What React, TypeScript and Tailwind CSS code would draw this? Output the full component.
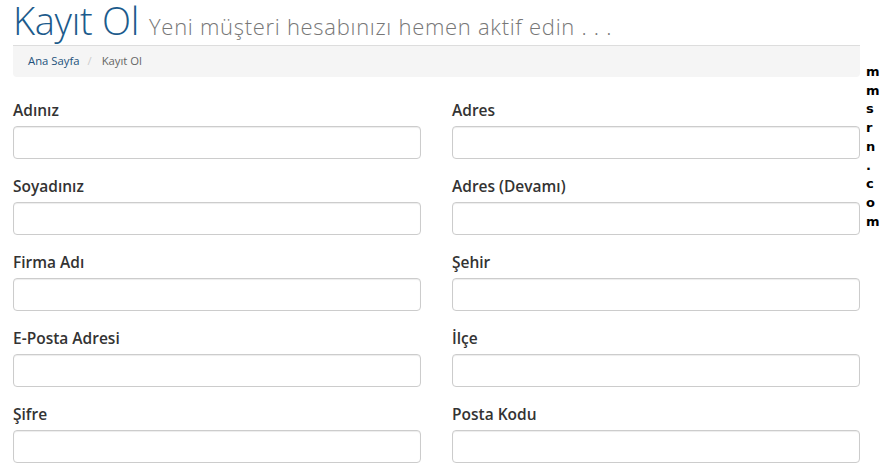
const left = ['Adınız', 'Soyadınız', 'Firma Adı', 'E-Posta Adresi', 'Şifre'];
const right = ['Adres', 'Adres (Devamı)', 'Şehir', 'İlçe', 'Posta Kodu'];

function Field({ label }: { label: string }) {
  return (
    <div className="mb-[17px]">
      <label className="block text-[15.5px] leading-[20px] font-semibold text-[#333] mb-[6px]">{label}</label>
      <input
        type="text"
        className="block w-full h-[33px] rounded-[4px] border border-[#ccc] bg-white px-3 shadow-[inset_0_1px_1px_rgba(0,0,0,0.075)] outline-none"
      />
    </div>
  );
}

export default function App() {
  return (
    <div className="flex bg-white min-h-screen pl-[13px] font-['Open_Sans',sans-serif]">
      <div className="w-[847px]">
        {/* Page title */}
        <h1 className="border-b border-[#ddd] pt-[1px] pb-[6px] text-[38px] leading-[38px] font-light text-[#1c5b8c] tracking-[-0.3px]">
          Kayıt Ol
          <span className="ml-[10px] text-[22px] leading-[20px] font-light text-[#777] tracking-[0.7px]">
            Yeni müşteri hesabınızı hemen aktif edin . . .
          </span>
        </h1>

        {/* Breadcrumb */}
        <div className="h-[31px] flex items-center bg-[#f5f5f5] rounded-b-[4px] px-[15px] text-[11.3px]">
          <a className="text-[#23527c]">Ana Sayfa</a>
          <span className="pl-[8px] pr-[10px] text-[#ccc]">/</span>
          <span className="text-[#666]">Kayıt Ol</span>
        </div>

        {/* Form */}
        <div className="grid grid-cols-2 gap-x-[31px] mt-[23px]">
          <div>
            {left.map((l) => (
              <Field key={l} label={l} />
            ))}
          </div>
          <div>
            {right.map((l) => (
              <Field key={l} label={l} />
            ))}
          </div>
        </div>
      </div>

      {/* Vertical watermark */}
      <div className="ml-[6px] mt-[63px] flex flex-col font-['DejaVu_Sans',sans-serif] font-bold text-[13px] leading-[18.7px] text-black">
        {'mmsrn.com'.split('').map((c, i) => (
          <span key={i}>{c}</span>
        ))}
      </div>
    </div>
  );
}
